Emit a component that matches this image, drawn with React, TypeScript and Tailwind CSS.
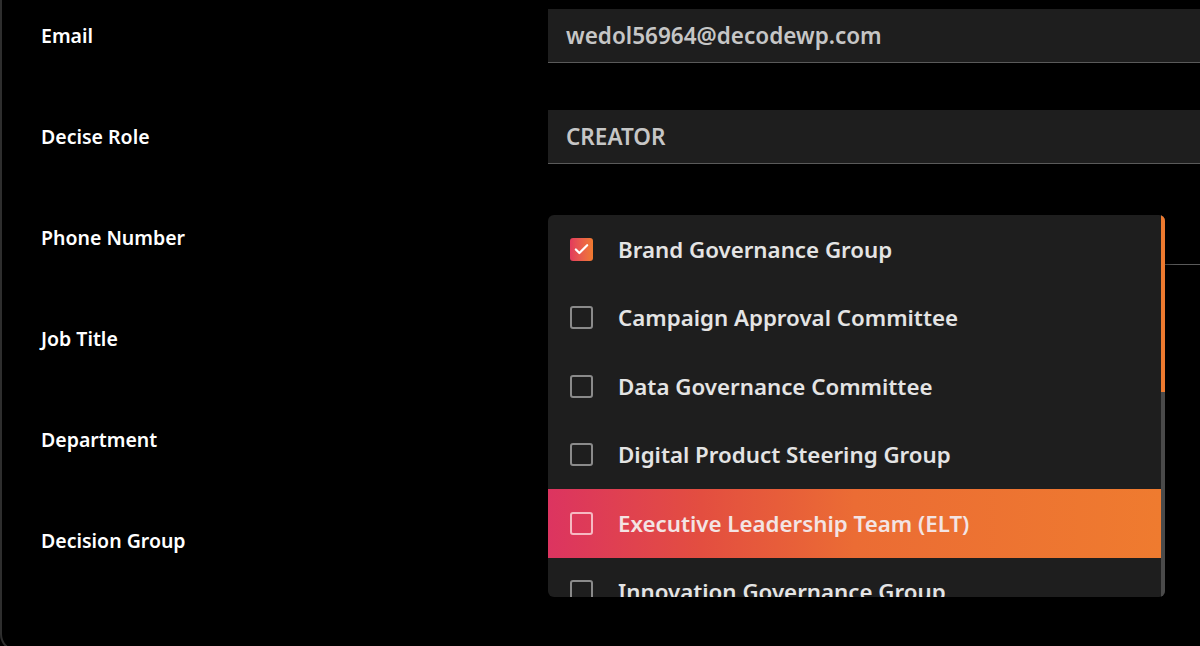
import { Check } from "lucide-react"

const fields = [
  { label: "Email", value: "wedol56964@decodewp.com" },
  { label: "Decise Role", value: "CREATOR" },
  { label: "Phone Number", value: "", bare: true },
  { label: "Job Title" },
  { label: "Department" },
  { label: "Decision Group" },
]

const groups = [
  { name: "Brand Governance Group", checked: true },
  { name: "Campaign Approval Committee" },
  { name: "Data Governance Committee" },
  { name: "Digital Product Steering Group" },
  { name: "Executive Leadership Team (ELT)", active: true },
  { name: "Innovation Governance Group" },
]

function Box({ checked, active }: { checked?: boolean; active?: boolean }) {
  if (checked) {
    return (
      <span className="flex h-[23px] w-[23px] shrink-0 items-center justify-center rounded-[3px] bg-gradient-to-r from-[#e23a5c] to-[#f07a2e]">
        <Check size={17} strokeWidth={3.2} className="text-white" />
      </span>
    )
  }
  return (
    <span
      className={
        "h-[23px] w-[23px] shrink-0 rounded-[3px] border-2 " +
        (active ? "border-[#f6b9c2]" : "border-[#8a8a8a]")
      }
    />
  )
}

export default function App() {
  return (
    <div className="relative h-[646px] w-[1200px] overflow-hidden bg-black font-['Noto_Sans',sans-serif]">
      <div className="h-[652px] w-[1240px] rounded-bl-[18px] border-b-2 border-l-2 border-[#2e2e2e] pt-[9px]">
        <div className="flex flex-col gap-[47px]">
          {fields.map((f) => (
            <div key={f.label} className="flex h-[54px] items-center">
              <div className="w-[546px] pl-[39px] text-[19.5px] font-semibold text-white">{f.label}</div>
              {f.value !== undefined && (
                <div
                  className={
                    "flex h-full flex-1 items-center border-b border-[#5a5a5a] pl-[18px] text-[22.5px] font-semibold text-[#c6c6c6] " +
                    (f.bare ? "" : "bg-[#1e1e1e]")
                  }
                >
                  {f.value}
                </div>
              )}
            </div>
          ))}
        </div>
      </div>

      <div className="absolute left-[548px] top-[215px] h-[382px] w-[617px] overflow-hidden rounded-[6px] bg-[#1e1e1e] shadow-[0_4px_14px_rgba(0,0,0,0.6)]">
        <div className="mr-[4px]">
          {groups.map((g) => (
            <div
              key={g.name}
              className={
                "flex h-[68.5px] items-center gap-[25px] pl-[22px] text-[22.3px] font-semibold whitespace-nowrap " +
                (g.active
                  ? "bg-[linear-gradient(90deg,#dc3460_0%,#e34e40_25%,#eb6c34_50%,#ef7b2f_100%)] text-[#f3e4e4]"
                  : "text-[#e4e4e4]")
              }
            >
              <Box checked={g.checked} active={g.active} />
              <span>{g.name}</span>
            </div>
          ))}
        </div>
        <div className="absolute right-0 top-0 flex h-full w-[4px] flex-col bg-[#4a4a4a]">
          <div className="h-[177px] w-full bg-[#ee7a2f]" />
        </div>
      </div>
    </div>
  )
}
